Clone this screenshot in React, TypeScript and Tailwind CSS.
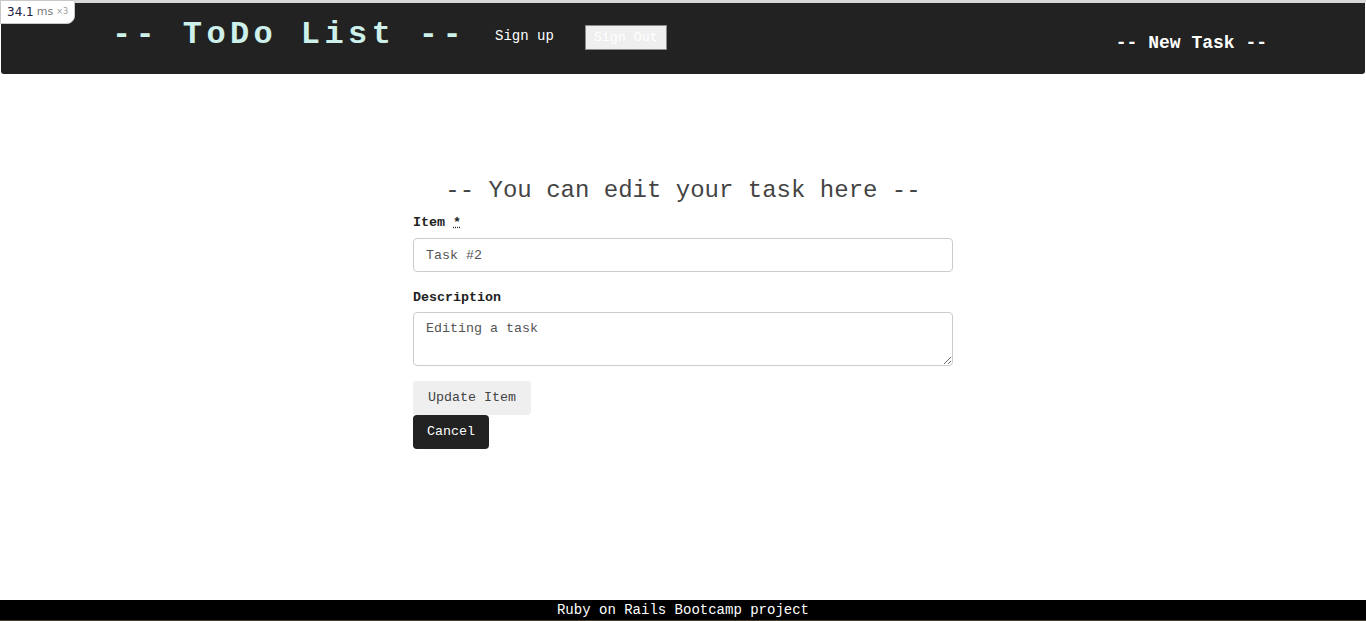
import { useState } from 'react';

const mono = "font-['Liberation_Mono','Courier_New',monospace]";

export default function App() {
  const [item, setItem] = useState('Task #2');
  const [desc, setDesc] = useState('Editing a task');

  return (
    <div className={`relative flex min-h-screen flex-col bg-white ${mono}`}>
      {/* profiler badge */}
      <div className="absolute left-0 top-0 z-10 flex h-[24px] w-[75px] items-center gap-[3px] rounded-br-[8px] border border-[#c8c8c8] bg-white pl-[6px] font-['DejaVu_Sans',sans-serif] text-[11px]">
        <span className="text-[12px] text-[#202040]">34.1</span>
        <span className="text-[11px] text-[#777]">ms</span>
        <span className="text-[8px] text-[#999]">×3</span>
      </div>

      <div className="h-[3px] bg-[#d8d8d8]" />
      <header className="mx-px flex h-[71px] items-start rounded-b-[3px] bg-[#222222] pl-[111px] pr-[98px]">
        <h1 className="mt-[13px] text-[32px] font-bold leading-[38px] tracking-[4.4px] text-[#cdf0ea]">
          -- ToDo List --
        </h1>
        <a href="#" className="ml-[29px] mt-[23px] text-[14px] leading-[20px] text-white">
          Sign up
        </a>
        <button className="ml-[31px] mt-[22px] h-[25px] border border-[#8a8a8a] bg-[#efefef] px-[8px] text-[13.33px] text-white">
          Sign Out
        </button>
        <a href="#" className="ml-auto mt-[29px] text-[18px] font-bold leading-[22px] text-white">
          -- New Task --
        </a>
      </header>

      <main className="flex flex-1 flex-col items-center">
        <form className="mt-[103px] flex w-[540px] flex-col" onSubmit={e => e.preventDefault()}>
          <h2 className="text-center text-[24px] leading-[28px] text-[#444]">
            -- You can edit your task here --
          </h2>
          <label className="mt-[10px] text-[13.33px] font-bold leading-[16px] text-[#222]">
            Item <abbr title="required" className="underline decoration-dotted">*</abbr>
          </label>
          <input
            value={item}
            onChange={e => setItem(e.target.value)}
            className="mt-[7px] h-[34px] rounded-[4px] border border-[#cccccc] px-[12px] text-[13.33px] text-[#555] outline-none"
          />
          <label className="mt-[18px] text-[13.33px] font-bold leading-[16px] text-[#222]">
            Description
          </label>
          <textarea
            value={desc}
            onChange={e => setDesc(e.target.value)}
            className="mt-[6px] h-[54px] rounded-[4px] border border-[#cccccc] px-[12px] py-[8px] text-[13.33px] leading-[16px] text-[#555] outline-none"
          />
          <div className="mt-[15px] flex flex-col items-start">
            <button
              type="submit"
              className="h-[34px] rounded-[4px] bg-[#efefef] px-[15px] text-[13.33px] text-[#444]"
            >
              Update Item
            </button>
            <a
              href="#"
              className="flex h-[34px] items-center rounded-[4px] bg-[#222222] px-[14px] text-[13.33px] text-white"
            >
              Cancel
            </a>
          </div>
        </form>
      </main>

      <footer className="flex h-[21px] items-center justify-center border-b border-[#4a4030] bg-black text-[14px] text-white">
        Ruby on Rails Bootcamp project
      </footer>
    </div>
  );
}
